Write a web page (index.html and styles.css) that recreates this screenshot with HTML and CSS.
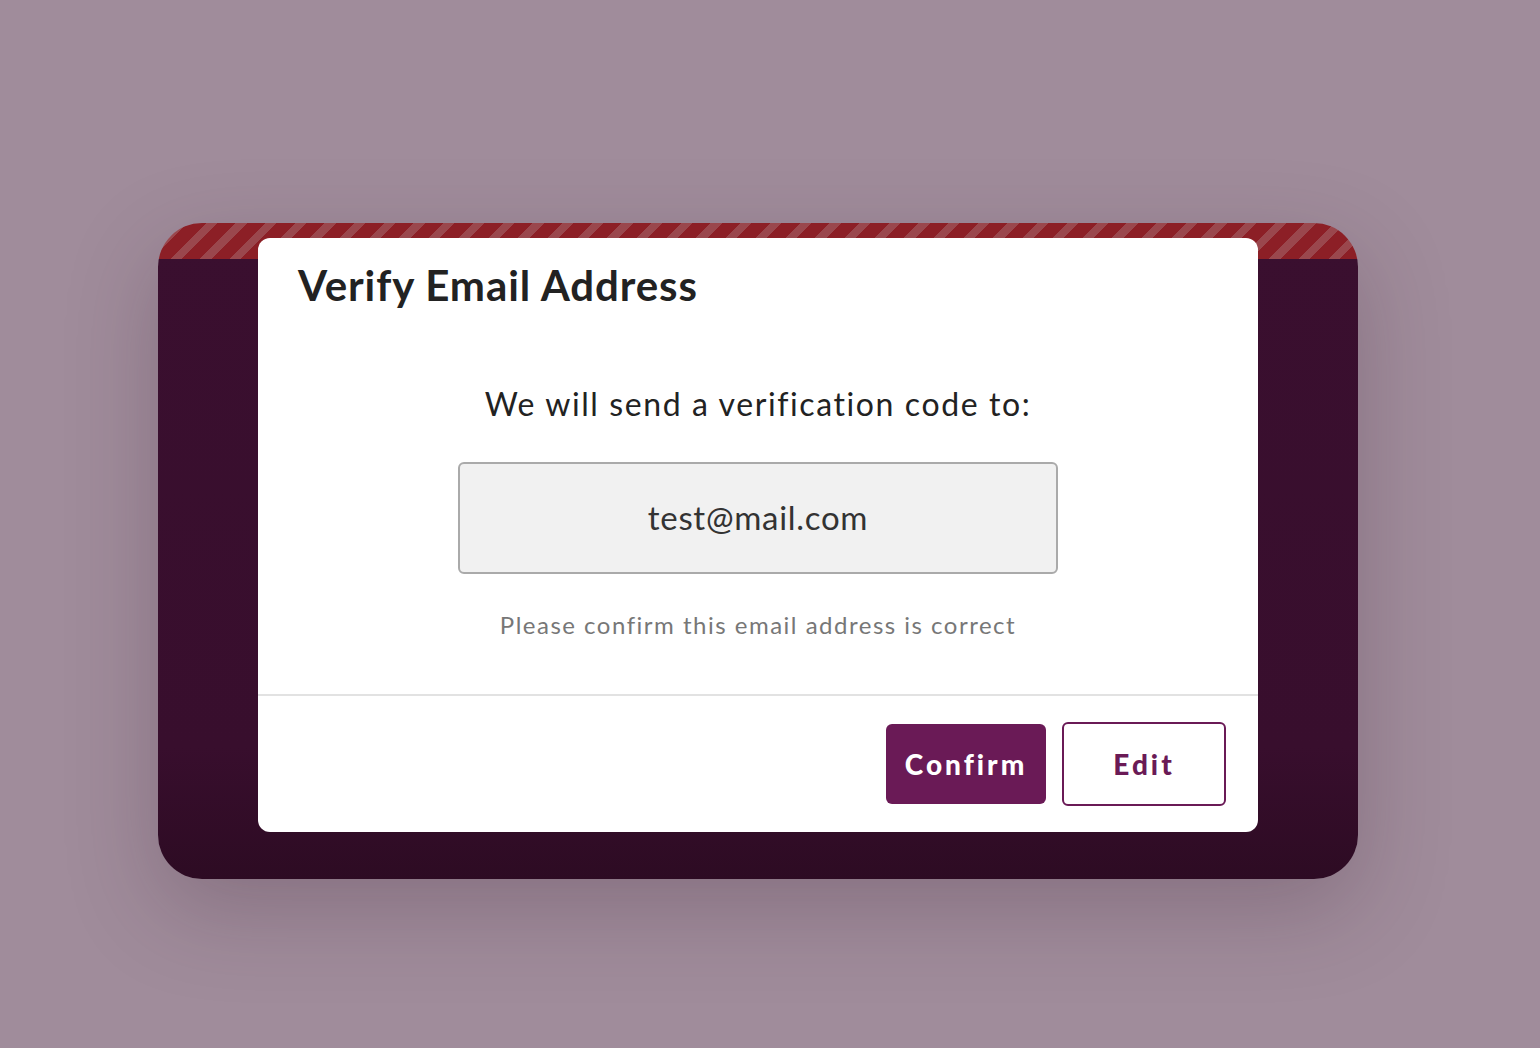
FILE: index.html
```html
<!DOCTYPE html>
<html>
<head>
<meta charset="utf-8">
<link rel="stylesheet" href="styles.css">
</head>
<body>
<div class="stage">
  <div class="card">
    <div class="modal">
      <h1 class="title">Verify Email Address</h1>
      <div class="body">
        <p class="lead">We will send a verification code to:</p>
        <div class="email">test@mail.com</div>
        <p class="hint">Please confirm this email address is correct</p>
      </div>
      <div class="footer">
        <button class="btn btn-primary">Confirm</button>
        <button class="btn btn-outline">Edit</button>
      </div>
    </div>
  </div>
</div>
</body>
</html>
```

FILE: styles.css
```css
* { box-sizing: border-box; }
html, body { margin: 0; padding: 0; }
body {
  width: 1540px;
  height: 1048px;
  background: #a08c9b;
  font-family: "Lato", "Noto Sans", sans-serif;
  overflow: hidden;
}
.stage {
  padding: 223px 0 0 158px;
}
.card {
  width: 1200px;
  height: 656px;
  border-radius: 44px;
  padding: 15px 100px 47px;
  background:
    repeating-linear-gradient(135deg, #8c1f26 0 13px, #9a474d 13px 21px) top left / 100% 36px no-repeat,
    linear-gradient(180deg, #3a0f2f 0%, #380e2d 80%, #2d0b23 100%);
  box-shadow: 0 30px 90px rgba(60, 30, 50, 0.25);
}
.modal {
  width: 1000px;
  height: 594px;
  background: #fff;
  border-radius: 12px;
  display: flex;
  flex-direction: column;
}
.title {
  margin: 0;
  padding: 22px 40px 0;
  font-size: 42px;
  font-weight: 700;
  letter-spacing: 0.9px;
  color: #222;
  line-height: 50px;
}
.body {
  flex: 1;
  display: flex;
  flex-direction: column;
  align-items: center;
  padding-top: 74px;
}
.lead {
  margin: 0;
  font-size: 32px;
  font-weight: 400;
  color: #222;
  line-height: 40px;
  letter-spacing: 1.6px;
}
.email {
  margin-top: 38px;
  width: 600px;
  height: 112px;
  border: 2px solid #aaa;
  border-radius: 6px;
  background: #f1f1f1;
  display: flex;
  align-items: center;
  justify-content: center;
  font-size: 33px;
  letter-spacing: 0.7px;
  color: #333;
  padding-bottom: 2px;
}
.hint {
  margin: 36px 0 0;
  font-size: 24px;
  color: #777;
  line-height: 30px;
  letter-spacing: 1.5px;
}
.footer {
  height: 138px;
  border-top: 2px solid #e2e2e2;
  display: flex;
  justify-content: flex-end;
  align-items: center;
  gap: 16px;
  padding: 0 32px;
}
.btn {
  font-family: "Lato", "Noto Sans", sans-serif;
  font-weight: 900;
  font-size: 28px;
  letter-spacing: 3px;
  border-radius: 6px;
  cursor: pointer;
  padding: 0;
}
.btn-primary {
  width: 160px;
  height: 80px;
  background: #6a1a56;
  color: #fff;
  border: none;
}
.btn-outline {
  width: 164px;
  height: 84px;
  background: #fff;
  color: #6a1a56;
  border: 2px solid #6a1a56;
}
```
